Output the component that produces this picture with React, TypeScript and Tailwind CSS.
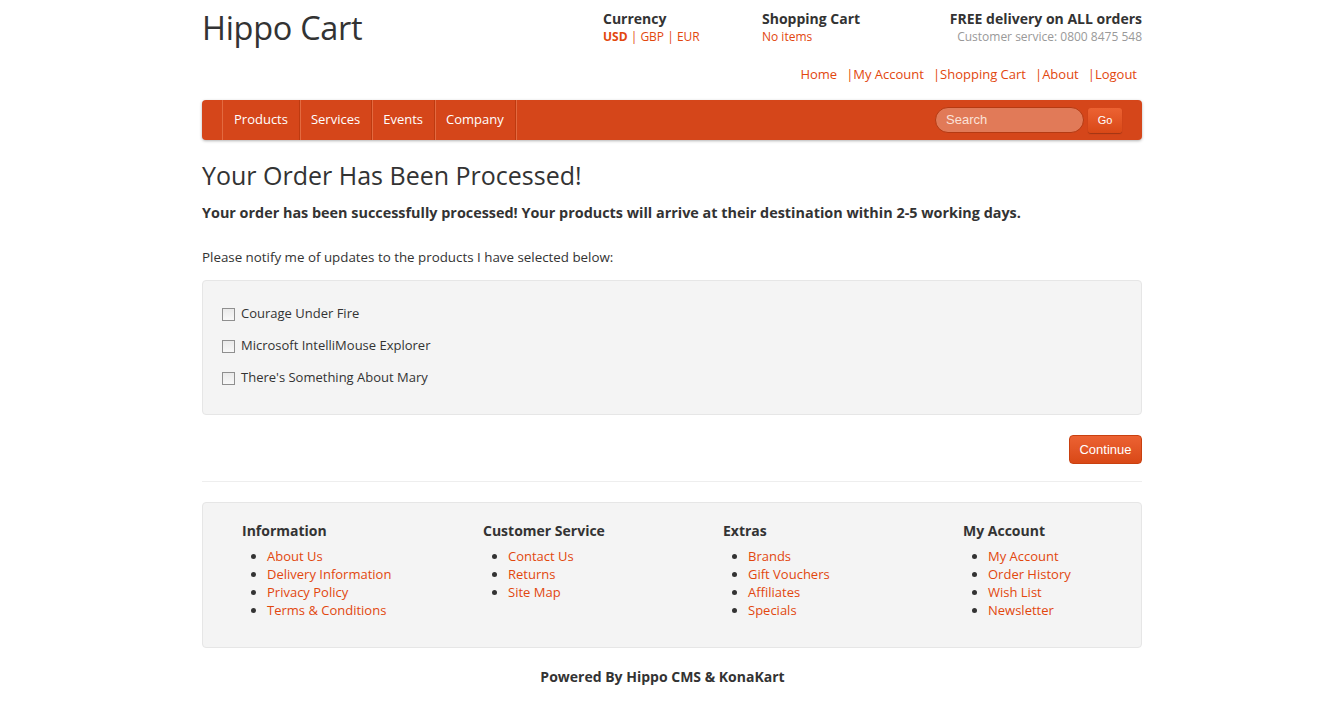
import React from "react";

const footerCols = [
  {
    title: "Information",
    links: ["About Us", "Delivery Information", "Privacy Policy", "Terms & Conditions"],
  },
  { title: "Customer Service", links: ["Contact Us", "Returns", "Site Map"] },
  { title: "Extras", links: ["Brands", "Gift Vouchers", "Affiliates", "Specials"] },
  { title: "My Account", links: ["My Account", "Order History", "Wish List", "Newsletter"] },
];

const products = [
  "Courage Under Fire",
  "Microsoft IntelliMouse Explorer",
  "There's Something About Mary",
];

const menu = ["Products", "Services", "Events", "Company"];
const topLinks = ["My Account", "Shopping Cart", "About", "Logout"];

export default function App() {
  return (
    <div className="min-h-[726px] bg-white text-[#333] font-['Open_Sans',sans-serif] text-[13px]">
      <div className="w-[945px] pl-[5px] mx-auto">
        {/* header */}
        <div className="flex h-[50px] pt-[8px]">
          <h1 className="text-[32.5px] font-medium leading-[40px] tracking-[-0.3px] text-[#333] w-[401px]">
            Hippo Cart
          </h1>
          <div className="w-[159px] pt-[2px]">
            <div className="text-[14px] font-bold leading-[18px]">Currency</div>
            <div className="text-[12px] leading-[18px] text-[#e2470e]">
              <span className="font-bold">USD</span> | GBP | EUR
            </div>
          </div>
          <div className="w-[160px] pt-[2px]">
            <div className="text-[14px] font-bold leading-[18px]">Shopping Cart</div>
            <div className="text-[12px] leading-[18px] text-[#e2470e]">No items</div>
          </div>
          <div className="flex-1 text-right pt-[2px]">
            <div className="text-[14px] font-bold leading-[18px]">FREE delivery on ALL orders</div>
            <div className="text-[12px] leading-[18px] text-[#999]">
              Customer service: 0800 8475 548
            </div>
          </div>
        </div>

        <div className="flex justify-end pr-[5px] h-[50px] pt-[15px] text-[13px] leading-[18px] text-[#e2470e]">
          <span>Home</span>
          {topLinks.map((l) => (
            <React.Fragment key={l}>
              <span className="ml-[9px]">|</span>
              <span>{l}</span>
            </React.Fragment>
          ))}
        </div>

        {/* nav bar */}
        <div className="h-[40px] bg-[#d5461a] rounded-[4px] shadow-[0_1px_3px_rgba(0,0,0,0.3)] flex items-stretch pl-[20px]">
          <div className="flex border-l border-[#e36a40]">
            {menu.map((m) => (
              <div
                key={m}
                className="px-[11px] flex items-center text-white text-[13px] border-r border-[#bd3a10] shadow-[1px_0_0_#e36a40]"
              >
                {m}
              </div>
            ))}
          </div>
          <div className="flex-1" />
          <div className="flex items-center gap-[4px] pr-[20px]">
            <div className="w-[149px] h-[26px] rounded-full bg-[#e17a58] border border-[#b53a12] flex items-center px-[10px] text-[13px] text-[#fbe2d8] font-['Liberation_Sans',sans-serif]">
              Search
            </div>
            <div className="w-[34px] h-[25px] rounded-[3px] bg-gradient-to-b from-[#ec6232] to-[#d94816] shadow-[0_1px_1px_rgba(0,0,0,0.25)] flex items-center justify-center text-white text-[11px] font-['Liberation_Sans',sans-serif]">
              Go
            </div>
          </div>
        </div>

        {/* content */}
        <h2 className="mt-[19px] text-[25px] font-medium leading-[32px] text-[#333]">
          Your Order Has Been Processed!
        </h2>
        <p className="mt-[12px] text-[14.4px] font-bold leading-[20px]">
          Your order has been successfully processed! Your products will arrive at their destination within 2-5 working days.
        </p>
        <p className="mt-[25px] text-[13.35px] leading-[18px]">
          Please notify me of updates to the products I have selected below:
        </p>

        <div className="mt-[14px] h-[135px] bg-[#f4f4f4] border border-[#e6e6e6] rounded-[4px] pt-[24px] pl-[19px] flex flex-col gap-[14px]">
          {products.map((p) => (
            <label key={p} className="flex items-center h-[18px] text-[13px]">
              <span className="w-[13px] h-[13px] border border-[#8f8f8f] bg-gradient-to-b from-[#eaeaea] to-[#f8f8f8] mr-[6px]" />
              {p}
            </label>
          ))}
        </div>

        <div className="flex justify-end mt-[20px]">
          <div className="w-[73px] h-[29px] rounded-[4px] bg-gradient-to-b from-[#ec6232] to-[#d94816] border border-[#c9400f] flex items-center justify-center text-white text-[13px] font-['Liberation_Sans',sans-serif]">
            Continue
          </div>
        </div>

        <div className="mt-[17px] border-t border-[#eee]" />

        {/* footer */}
        <div className="mt-[20px] h-[146px] bg-[#f4f4f4] border border-[#e6e6e6] rounded-[4px] pl-[39px] pt-[17px] grid grid-cols-[241px_240px_240px_1fr]">
          {footerCols.map((c) => (
            <div key={c.title}>
              <h3 className="text-[14px] font-bold leading-[22px]">{c.title}</h3>
              <ul className="mt-[5px] list-disc pl-[25px] marker:text-[#333]">
                {c.links.map((l) => (
                  <li key={l} className="text-[13px] leading-[18px] text-[#e2470e]">
                    {l}
                  </li>
                ))}
              </ul>
            </div>
          ))}
        </div>

        <div className="mt-[20px] pr-[19px] text-center text-[14px] font-bold leading-[18px]">
          Powered By Hippo CMS &amp; KonaKart
        </div>
      </div>
    </div>
  );
}
